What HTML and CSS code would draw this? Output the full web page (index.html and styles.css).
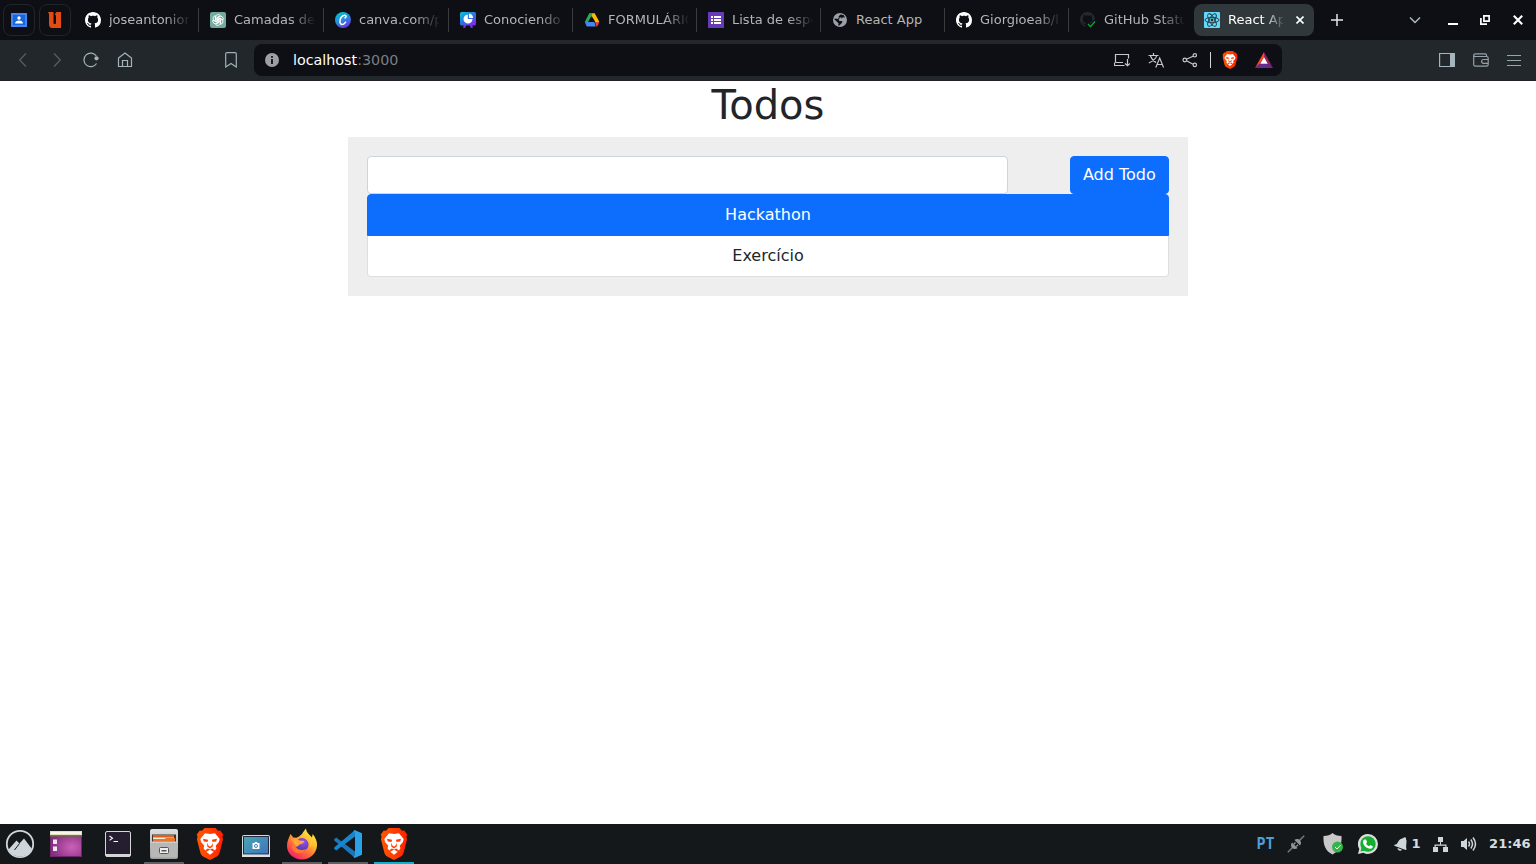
FILE: index.html
```html
<!DOCTYPE html>
<html lang="pt">
<head>
<meta charset="utf-8">
<title>React App</title>
<link rel="stylesheet" href="styles.css">
</head>
<body>
<svg class="defs" width="0" height="0" aria-hidden="true">
  <defs>
    <linearGradient id="gBrave" x1="0" x2="1" y1="0" y2="0"><stop offset="0" stop-color="#ff5601"/><stop offset=".5" stop-color="#ff4000"/><stop offset="1" stop-color="#ff1f01"/></linearGradient>
    <linearGradient id="gCanva" x1=".2" y1="0" x2=".7" y2="1"><stop offset="0" stop-color="#00c4cc"/><stop offset=".5" stop-color="#2a8be0"/><stop offset="1" stop-color="#6c2ee6"/></linearGradient>
    <linearGradient id="gShow" x1="0" y1="0" x2=".8" y2="1"><stop offset="0" stop-color="#08cbd0"/><stop offset=".5" stop-color="#2678e0"/><stop offset="1" stop-color="#7d2ae8"/></linearGradient>
    <radialGradient id="gDesk" cx=".68" cy=".6" r=".65"><stop offset="0" stop-color="#cb62b7"/><stop offset="1" stop-color="#852d82"/></radialGradient>
    <linearGradient id="gShot" x1="0" y1="0" x2="1" y2="1"><stop offset="0" stop-color="#4aa9b3"/><stop offset="1" stop-color="#3c6fbb"/></linearGradient>
    <linearGradient id="gFox" x1=".85" y1="0" x2=".2" y2="1"><stop offset="0" stop-color="#fff44f"/><stop offset=".35" stop-color="#ffbd2e"/><stop offset=".62" stop-color="#ff7139"/><stop offset="1" stop-color="#f5156c"/></linearGradient>
    <radialGradient id="gGlobe" cx=".6" cy=".3" r=".7"><stop offset="0" stop-color="#a04dec"/><stop offset="1" stop-color="#4b3aad"/></radialGradient>
    <linearGradient id="gFile" x1="0" y1="0" x2="0" y2="1"><stop offset="0" stop-color="#dededc"/><stop offset="1" stop-color="#9c9c9a"/></linearGradient>
    <symbol id="github" viewBox="0 0 16 16"><path fill="currentColor" d="M8 0C3.58 0 0 3.58 0 8c0 3.54 2.29 6.53 5.47 7.59.4.07.55-.17.55-.38 0-.19-.01-.82-.01-1.49-2.01.37-2.53-.49-2.69-.94-.09-.23-.48-.94-.82-1.13-.28-.15-.68-.52-.01-.53.63-.01 1.08.58 1.23.82.72 1.21 1.87.87 2.33.66.07-.52.28-.87.51-1.07-1.78-.2-3.64-.89-3.64-3.95 0-.87.31-1.59.82-2.15-.08-.2-.36-1.02.08-2.12 0 0 .67-.21 2.2.82.64-.18 1.32-.27 2-.27.68 0 1.36.09 2 .27 1.53-1.04 2.2-.82 2.2-.82.44 1.1.16 1.92.08 2.12.51.56.82 1.27.82 2.15 0 3.07-1.87 3.75-3.65 3.95.29.25.54.73.54 1.48 0 1.07-.01 1.93-.01 2.2 0 .21.15.46.55.38A8.013 8.013 0 0016 8c0-4.42-3.58-8-8-8z"/></symbol>
    <symbol id="brave" viewBox="0 0 28 32">
      <path fill="url(#gBrave)" d="M8.500 0h11l2.500 2.800 2.200-.3 3 4-.7 2.300.5 2.700-3.300 13c-.5 1.800-1.400 3-2.800 4L14 32l-6.900-3.500c-1.400-1-2.300-2.200-2.800-4L1 11.500l.5-2.700L.8 6.500l3-4 2.200.3z"/>
      <path fill="#fff" d="M9 5.300l5 .7 5-.7 4.700 5.700-.8 3-3.200 3.800.7 2.500-1.500 2.200-2.700-2-2.200 1-2.200-1-2.700 2-1.500-2.200.7-2.500L5.100 14l-.8-3zM10.200 23.700l3.800-2 3.800 2-3.800 3z"/>
      <path fill="#ff4000" d="M7 10.800l5.100 1-.6 2.200-3.700-.4zM21 10.800l-5.100 1 .6 2.200 3.700-.4zM11.200 14.800l1.200 2.700L14 18.700l1.600-1.200 1.200-2.700v3.700l-2.800 2-2.800-2z"/>
    </symbol>
  </defs>
</svg>

<header class="tabstrip">
  <div class="pinned"><svg width="16" height="16" viewBox="0 0 16 16"><path fill="#4285f4" d="M0 1h16v14H0z"/><path fill="#1a66d6" d="M2 3h12v10H2z"/><circle cx="8" cy="6" r="1.700" fill="#fff"/><path fill="#fff" d="M4 11.500c0-4 8-4 8 0z"/></svg></div>
  <div class="pinned"><svg width="16" height="16" viewBox="0 0 16 16"><path fill="#e24a16" d="M1 0h5.500v10.500c0 1 .4 1.500 1.200 1.500s1.300-.5 1.300-1.500V3.500L7.800 2.500 9.500 0H14v16H5c-2 0-3-1.500-3-4V2z"/></svg></div>
  <nav class="tabs">
    <div class="tab wide"><svg class="fav white"><use href="#github"/></svg><span class="label">joseantonior</span></div>
    <div class="tab wide"><svg class="fav" viewBox="0 0 16 16"><rect width="16" height="16" rx="2" fill="#74aa9c"/><g fill="none" stroke="#fff" stroke-width=".85"><path id="petal" d="M5.700 9.200V5.100a2.600 2.600 0 0 1 4.700-1.500L7.200 5.500v3.600"/><use href="#petal" transform="rotate(60 8 8)"/><use href="#petal" transform="rotate(120 8 8)"/><use href="#petal" transform="rotate(180 8 8)"/><use href="#petal" transform="rotate(240 8 8)"/><use href="#petal" transform="rotate(300 8 8)"/></g></svg><span class="label">Camadas de</span></div>
    <div class="tab wide"><svg class="fav" viewBox="0 0 16 16"><circle cx="8" cy="8" r="8" fill="url(#gCanva)"/><path d="M10 6c1.400-.8 1.500-2.800-.3-2.800C6.800 3.200 4.500 7 4.900 9.900c.4 3.300 3.700 3.300 5.700.3" fill="none" stroke="#fff" stroke-width="1.500" stroke-linecap="round"/></svg><span class="label">canva.com/p</span></div>
    <div class="tab"><svg class="fav" viewBox="0 0 16 16"><path fill="none" stroke="#7d2ae8" stroke-width="2.200" d="M5.500 12L4 16M10.500 12l1.500 4"/><rect width="16" height="13.500" rx="1.500" fill="url(#gShow)"/><path fill="#fff" d="M7.800 2.500V7h4.700A4.500 4.500 0 1 1 7.800 2.500z"/><path fill="#fff" d="M9 1.700A4.300 4.300 0 0 1 13 6H9z"/></svg><span class="label">Conociendo</span></div>
    <div class="tab"><svg class="fav" viewBox="0 0 16 16"><path fill="#188038" d="M5.300 1.200H8l1.500 2.500L8 6.200z"/><path fill="#fbbc04" d="M8 1.200h2.700l4.600 8.500-3.700.8L7.300 3z"/><path fill="#34a853" d="M5.300 1.200H8L8.500 2 3.500 11 .8 10z"/><path fill="#4285f4" d="M.8 10h9.500l1.500 4.500H3.500c-.5 0-.8-.2-1-.6z"/><path fill="#ea4335" d="M11 10h4.300l-1.800 3.900c-.2.400-.6.600-1 .6z"/></svg><span class="label">FORMULÁRIO</span></div>
    <div class="tab"><svg class="fav" viewBox="0 0 16 16"><path fill="#673ab7" d="M0 0h16v16H0z"/><path fill="#fff" d="M3 4h2v2H3zm3 0h7v2H6zM3 7h2v2H3zm3 0h7v2H6zm-3 3h2v2H3zm3 0h7v2H6z"/></svg><span class="label">Lista de espe</span></div>
    <div class="tab"><svg class="fav" viewBox="0 0 16 16"><circle cx="8" cy="8" r="7" fill="#9aa0a6"/><path fill="#0e0f14" d="M8.500 2.500l3 .6 1.600 2.400-2.300-.3-.8 1.300H7.500L6.500 8l1.200 1h2.500v1.600l-2.500 2.700-1.400.4.200-2.500L2.500 7.500l.2-1 3 .5 1.300-1.500-.5-1z"/><path fill="#9aa0a6" d="M7.500 5.500h2v2h-2z"/></svg><span class="label full">React App</span></div>
    <div class="tab"><svg class="fav white"><use href="#github"/></svg><span class="label">Giorgioeab/l</span></div>
    <div class="tab last"><svg class="fav dark" viewBox="0 0 16 16"><use href="#github" width="15" height="15"/><path d="M8 12l2.500 2.700L15.500 9" fill="none" stroke="#0e0f14" stroke-width="4"/><path d="M8 12l2.500 2.700L15 9.500" fill="none" stroke="#0b9e32" stroke-width="1.500"/></svg><span class="label">GitHub Statu</span></div>
    <div class="tab active"><svg class="fav" viewBox="0 0 16 16"><rect width="16" height="16" rx="1" fill="#61dafb"/><g fill="none" stroke="#263238" stroke-width=".9"><ellipse cx="8" cy="8" rx="7" ry="2.700"/><ellipse cx="8" cy="8" rx="7" ry="2.700" transform="rotate(30 8 8)" visibility="hidden"/><ellipse cx="8" cy="8" rx="7" ry="2.700" transform="rotate(60 8 8)"/><ellipse cx="8" cy="8" rx="7" ry="2.700" transform="rotate(120 8 8)"/></g><circle cx="8" cy="8" r="1.400" fill="#263238"/></svg><span class="label">React App</span><svg class="close" width="8" height="8" viewBox="0 0 8 8"><path d="M.5.500l7 7M7.500.5l-7 7" stroke="#fff" stroke-width="1.600"/></svg></div>
  </nav>
  <svg class="newtab" width="12" height="12" viewBox="0 0 12 12"><path d="M6 0v12M0 6h12" stroke="#e4e6e8" stroke-width="1.500"/></svg>
  <div class="winctl">
    <svg width="12" height="12" viewBox="0 0 12 12"><path d="M1 3.500l5 5 5-5" fill="none" stroke="#a9bcc4" stroke-width="1.500"/></svg>
    <svg width="12" height="12" viewBox="0 0 12 12"><path d="M1 9h10v2H1z" fill="#fff"/></svg>
    <svg width="10" height="10" viewBox="0 0 10 10"><path d="M3.900.9h5.200v5.200H3.900zM.9 3v6.100H7" fill="none" stroke="#fff" stroke-width="1.700"/></svg>
    <svg width="10" height="10" viewBox="0 0 10 10"><path d="M.8.8l8.400 8.400M9.200.8L.8 9.200" stroke="#fff" stroke-width="2.100"/></svg>
  </div>
</header>

<div class="toolbar">
  <div class="navbtns">
    <svg viewBox="0 0 16 16"><path d="M11 1.500L4.700 8 11 14.500" stroke="#586167"/></svg>
    <svg viewBox="0 0 16 16"><path d="M5 1.500L11.300 8 5 14.500" stroke="#586167"/></svg>
    <svg viewBox="0 0 16 16"><path d="M13.500 11.500A6.800 6.800 0 1 1 13.300 4" stroke="#a5b5bc"/><circle cx="13.500" cy="6.300" r="2.100" fill="#a5b5bc"/></svg>
    <svg viewBox="0 0 16 16"><path d="M1.500 6L8 1l6.500 5v8.500h-13zM5.500 14.500v-6h5v6" stroke="#a5b5bc"/></svg>
  </div>
  <svg class="bookmark" viewBox="0 0 16 16"><path d="M2.700 2Q2.700.7 4 .7h8Q13.300.7 13.300 2v13L8 11.500 2.700 15z" stroke="#a0b0b7"/></svg>
  <div class="address">
    <svg width="14" height="14" viewBox="0 0 14 14"><circle cx="7" cy="7" r="7" fill="#9c9fa6"/><path d="M6.100 3h1.800v1.700H6.100zm0 3h1.800v5H6.100z" fill="#0e0f14"/></svg>
    <div class="url">localhost<span class="port">:3000</span></div>
    <div class="addricons">
      <svg viewBox="0 0 16 16"><path d="M1.500 10.500v-8h13v4M1.500 10.500H9M.5 10.500v3h10M13.500 7v6.500M11 11.500l2.500 2.300L16 11.500" stroke="#c5c8cc"/></svg>
      <svg viewBox="0 0 16 16"><path d="M.5 3.500h10M5.500 1v2.500M2.500 4C3.500 7 5.500 9 8 10.500M8.500 4C8 6.500 4 9.500.8 11" stroke="#c5c8cc"/><path d="M7.800 15.500L11.700 6l3.900 9.500M9.200 12.500h5" stroke="#c5c8cc"/></svg>
      <svg viewBox="0 0 16 16"><path d="M4.500 7.200l6.500-3M4.500 8.800l6.500 3.400" stroke="#c5c8cc"/><circle cx="2.800" cy="8" r="1.800" stroke="#c5c8cc"/><circle cx="12.800" cy="3.300" r="1.700" stroke="#c5c8cc"/><circle cx="12.800" cy="12.900" r="1.700" stroke="#c5c8cc"/></svg>
    </div>
    <i class="bar"></i>
    <svg class="shield"><use href="#brave"/></svg>
    <svg width="18" height="16" viewBox="0 0 18 16"><path fill="#ff4724" d="M9 0v5l-4 6.500L0 16z"/><path fill="#9e1f63" d="M9 0l9 16-5-4.500L9 5z"/><path fill="#662d91" d="M0 16l5-4.500h8l5 4.500z"/><path fill="#fff" d="M9 5l3.800 6.700H5.200z"/></svg>
  </div>
  <div class="toolright">
    <svg viewBox="0 0 16 16"><path d="M.6 1.500h14.800v13H.6z" stroke="#a5b5bc"/><path d="M11 1.500h4.500v13H11z" fill="#a5b5bc"/></svg>
    <svg viewBox="0 0 16 16"><path d="M13.500 4.500V3q0-1.200-1.200-1.200H2.200Q.7 1.800.7 3.200V12.500Q.7 14.200 2.400 14.200h11q1.800 0 1.800-1.700V6.200q0-1.700-1.800-1.700H2.500Q.7 4.500.7 3.200M15 7.500h-4.500a1.800 1.800 0 0 0 0 3.800H15" stroke="#94a2a9"/></svg>
    <svg viewBox="0 0 16 16"><path d="M1 3.500h14M1 8.500h14M1 13.500h14" stroke="#98a5ab"/></svg>
  </div>
</div>

<main class="page">
  <h1>Todos</h1>
  <section class="card">
    <form class="entry"><input type="text" class="field" aria-label="Todo"><button type="button" class="btn">Add Todo</button></form>
    <ul class="list"><li class="item current">Hackathon</li><li class="item">Exercício</li></ul>
  </section>
</main>

<footer class="taskbar">
  <div class="apps">
    <div class="app"><svg width="30" height="30" viewBox="0 0 30 30"><circle cx="15" cy="15" r="13.200" fill="none" stroke="#ced6db" stroke-width="1.800"/><path fill="#ced6db" d="M3.500 20.500L11.500 11.500l3 3 4.500-5 8 10.500C24 30 7 30 3.500 20.500z"/><path d="M14.500 14.500L9.500 21" stroke="#14181b" stroke-width="1"/></svg></div>
    <div class="app"><svg width="32" height="26" viewBox="0 0 32 26"><path fill="url(#gDesk)" d="M0 1h32v25H0z"/><path fill="none" stroke="#6c2669" d="M.5.500h31v25H.5z"/><path fill="#e3dfc4" d="M0 0h32v4.500H0z"/><path fill="#f8f6ea" d="M1 1h30v2H1z"/><path fill="#6f6643" d="M0 4.200h32v1.500H0z"/><path fill="#f1e4f1" d="M3 8.500h4v4.500H3zm0 7h4V20H3z"/></svg></div>
    <div class="app gap"><svg width="26" height="26" viewBox="0 0 26 26"><rect x=".5" y=".5" width="25" height="25" rx="1.500" fill="#241e30" stroke="#d6d4d5"/><path fill="#d6d4d5" d="M1 23h24v2.500H1z"/><path d="M4.500 5l3 2.200-3 2.200M8.500 10.500H13" fill="none" stroke="#fff" stroke-width="1.100"/></svg></div>
    <div class="app open"><svg width="28" height="30" viewBox="0 0 28 30"><rect width="28" height="30" rx="2" fill="url(#gFile)"/><path fill="#3c3633" d="M2 5.500h24V13H2z"/><path fill="#e0601f" d="M3 6h21v3H3z"/><path fill="#f3e8d5" d="M3 8.500h21V10H3z"/><path fill="#e8762b" d="M3 10h12l1-1h9v3.500H3z"/><path fill="#b7b7b5" d="M1 13h26v15.500H1z"/><path fill="#e2e2e0" d="M1 12.500h26v1H1z"/><rect x="9.500" y="18.500" width="9" height="6" rx="1" fill="#eee" stroke="#555"/><path fill="#555" d="M11.500 21h5v1.500h-5z"/></svg></div>
    <div class="app"><svg class="lion"><use href="#brave"/></svg></div>
    <div class="app"><svg class="shot" width="28" height="22" viewBox="0 0 28 22"><rect x=".5" y=".5" width="27" height="21" rx="1" fill="url(#gShot)" stroke="#dadada"/><path d="M1.500 1.500h25v17.500h-25z" fill="none" stroke="#25283c"/><path fill="#ddd" d="M0 19.500h28V22H0z"/><path fill="#fff" d="M10.500 8h2l.6-1h1.800l.6 1h2v6h-7z"/><circle cx="14" cy="11" r="1.500" fill="none" stroke="#4386b8"/></svg></div>
    <div class="app open"><svg width="32" height="32" viewBox="0 0 32 32"><path fill="url(#gFox)" d="M3 9.500L4.500 6l2.800 3.500 3 .2L13 8.500l3-2.500C17.500 3.500 18.500 2 20 .5c.5 4.500 3.500 6 6 9l.7-3.500C29.500 9.500 31.500 13.500 31 18 30 26 24 31.500 16 31.500S1 26 1 18c0-3 .8-6 2-8.500z"/><circle cx="16" cy="16.500" r="6.500" fill="url(#gGlobe)"/><path fill="#ffa436" d="M5 11l5-1 3.500 2.500 5 .5c-.5 2-2.500 3-4.500 3.300-1 1.200-1.800 1.200-3 2.700-2.500-2-4.500-4.500-6-8z"/><path fill="#ff7a2f" d="M8 14c0 7 6.500 9.500 12 7-3 6-13 5.500-14-2z"/><path fill="#ffc93a" d="M19 8c5 1 6.500 6 4.500 12 4-4 3-10 0-13z"/></svg></div>
    <div class="app open"><svg width="28" height="28" viewBox="0 0 28 28"><path fill="#1c75b8" d="M0 9.500l2.200-2L21 21.500V28L.2 10.500z"/><path fill="#1687cf" d="M0 18.500l2.200 2L21 6.500V0L.2 17.500z"/><path fill="#2ba1e8" d="M20.500 0L28 3.300v21.400L20.500 28l-1-1.500 1.500-1V2.500l-1.500-1z"/></svg></div>
    <div class="app open focus"><svg class="lion"><use href="#brave"/></svg></div>
  </div>
  <div class="tray">
    <span class="lang">PT</span>
    <svg width="18" height="18" viewBox="0 0 18 18"><path d="M.8 17.200l5-5M12.200 5.800l5-5" stroke="#77797b" stroke-width="1.500"/><path fill="#939698" d="M5 7.500l5.500 5.500c-1.700 1.500-4 1.200-5.300 0s-1.700-3.800-.2-5.500zM7.500 5L13 10.500c1.500-1.700 1.200-4 0-5.300S9.200 3.500 7.500 5z"/><path d="M6.800 9.200l1.700-1.700M9.300 11.500l1.700-1.700" stroke="#939698" stroke-width="1.300"/></svg>
    <svg class="guard" width="21" height="22" viewBox="0 0 21 22"><path fill="#c8c8c8" d="M9.500 0c2 2 5 3 9 3 .5 9-2 15-9 18.500C2.500 18 0 12 .5 3c4 0 7-1 9-3z"/><circle cx="14.500" cy="14" r="5.500" fill="#35b44a"/><path d="M12 14l2 2 3.500-3.700" fill="none" stroke="#fff"/></svg>
    <svg class="whats" width="20" height="20" viewBox="0 0 20 20"><path fill="#dedede" d="M10 0a10 10 0 0 1 0 20c-1.700 0-3.300-.4-4.700-1.200L0 20l1.300-5A10 10 0 0 1 10 0z"/><circle cx="10" cy="10" r="7.700" fill="#14af30"/><path fill="#14af30" d="M2.500 17.500l1-4L7 16.500z"/><path fill="#fff" d="M6.700 5.500h1.200l1.200 2.600-1 1.300c.7 1.500 1.700 2.300 3 2.800l1.200-1.200 2.500 1.200c.2 1.500-1 2.500-2.500 2.500-4 0-7.600-4-7.300-7 .1-1 .8-1.800 1.700-2.200z"/></svg>
    <svg class="bell" width="14" height="14" viewBox="0 0 14 14"><path fill="#ced6db" d="M10.500.2l1.500.6v1.500c1.300 2.200-.2 5.200.2 8.200l.3 2-.8.5L.2 8.700l.3-.9 2-.6C4.500 5.500 4.500 2 8.800 1.300zM3.500 11l4.700 1.800c-1.700 1.900-4.700.8-4.700-1.800z"/></svg>
    <span class="count">1</span>
    <svg class="net" width="15" height="15" viewBox="0 0 15 15"><path fill="#ced6db" d="M5 0h5v5H8v2.500h5.500V10H15v5h-5v-5h2.300V8.700H2.700V10H5v5H0v-5h1.500V7.500H7V5H5z"/></svg>
    <svg class="vol" width="16" height="16" viewBox="0 0 16 16"><path fill="#ced6db" d="M0 5h2.500L6 2v12l-3.500-3H0z"/><path d="M7.500 5.500q2 2.500 0 5M9.800 3.500q3.400 4.500 0 9M12 1.500q5 6.500 0 13" fill="none" stroke="#ced6db" stroke-width="1.500"/></svg>
    <span class="clock">21:46</span>
  </div>
</footer>
</body>
</html>
```
FILE: styles.css
```css
* { box-sizing: border-box; }
body {
  margin: 0;
  height: 864px;
  overflow: hidden;
  display: flex;
  flex-direction: column;
  background: #fff;
  font-family: "DejaVu Sans", sans-serif;
}
svg { display: block; flex: none; }
.defs { position: absolute; }

.tabstrip {
  height: 40px;
  flex: none;
  display: flex;
  align-items: center;
  background: #0e0f14;
  padding-left: 3px;
}
.pinned {
  width: 32px;
  height: 32px;
  margin-right: 4px;
  border: 1px solid #202529;
  border-radius: 8px;
  display: flex;
  align-items: center;
  justify-content: center;
  flex: none;
}
.tabs { display: flex; width: 1239px; flex: none; }
.tab {
  width: 124px;
  flex: none;
  height: 32px;
  padding-left: 10px;
  display: flex;
  align-items: center;
  color: #b4b5b8;
  font-size: 13px;
  background: linear-gradient(#3a3b3e, #3a3b3e) right 1px center / 1px 24px no-repeat;
}
.tab.wide { width: 125px; }
.tab.last { background: none; }
.tab.active {
  width: 120px;
  background: #30383c;
  border-radius: 8px;
  color: #fff;
}
.fav { width: 16px; height: 16px; margin-right: 8px; }
.white { color: #fff; }
.dark { color: #24292e; }
.label {
  width: 80px;
  flex: none;
  line-height: 20px;
  white-space: nowrap;
  -webkit-mask-image: linear-gradient(90deg, #000 56px, transparent 82px);
  mask-image: linear-gradient(90deg, #000 56px, transparent 82px);
}
.label.full { -webkit-mask-image: none; mask-image: none; }
.active .label {
  width: 55px;
  -webkit-mask-image: linear-gradient(90deg, #000 34px, transparent 58px);
  mask-image: linear-gradient(90deg, #000 34px, transparent 58px);
}
.close { margin-left: 13px; }
.newtab { margin-left: 17px; }
.winctl { display: flex; align-items: center; margin-left: 66px; }
.winctl svg + svg { margin-left: 26px; }
.winctl svg:nth-child(3) { margin-left: 21px; }
.winctl svg:last-child { margin-left: 23px; }

.toolbar {
  height: 41px;
  flex: none;
  display: flex;
  align-items: center;
  background: #21272a;
  border-bottom: 1px solid #202126;
}
.toolbar svg { fill: none; stroke-width: 1.200; }
.navbtns { display: flex; gap: 18px; margin-left: 15px; }
.navbtns svg, .bookmark, .addricons svg, .toolright svg { width: 16px; height: 16px; }
.bookmark { margin-left: 90px; }
.address {
  width: 1028px;
  height: 32px;
  margin-left: 15px;
  padding: 0 9px 0 11px;
  border-radius: 8px;
  background: #0e0f14;
  display: flex;
  align-items: center;
}
.url { margin-left: 14px; flex: 1; font-size: 14.300px; line-height: 20px; color: #fff; }
.port { color: #7b7e83; }
.addricons { display: flex; gap: 18px; }
.bar { width: 1px; height: 16px; margin: 0 11px 0 12px; background: #d4d6d8; }
.shield { width: 16px; height: 18px; margin-right: 17px; }
.toolright { display: flex; gap: 17.500px; margin-left: 157px; }

.page { flex: 1; background: #fff; color: #212529; }
.page h1 {
  margin: 0 0 8px;
  font-size: 40px;
  font-weight: 400;
  line-height: 48px;
  text-align: center;
}
.card { width: 840px; margin: 0 auto; padding: 19.200px; background: #eee; }
.entry { display: flex; justify-content: space-between; }
.field {
  width: 80%;
  height: 38px;
  border: 1px solid #ced4da;
  border-radius: 4px;
  background: #fff;
  outline: none;
}
.btn {
  height: 38px;
  padding: 6px 12px;
  border: 1px solid #0d6efd;
  border-radius: 4px;
  background: #0d6efd;
  color: #fff;
  font: 16px/24px "DejaVu Sans", sans-serif;
}
.list { list-style: none; margin: 0; padding: 0; border-radius: 4px; }
.item {
  padding: 8px 16px;
  border: 1px solid rgba(0, 0, 0, .125);
  border-top: 0;
  border-radius: 0 0 4px 4px;
  background: #fff;
  font-size: 16px;
  line-height: 24px;
  text-align: center;
}
.item.current {
  border: 1px solid #0d6efd;
  border-radius: 4px 4px 0 0;
  background: #0d6efd;
  color: #fff;
}

.taskbar {
  height: 40px;
  flex: none;
  display: flex;
  justify-content: space-between;
  background: #14181b;
}
.apps { display: flex; gap: 6px; }
.app {
  width: 40px;
  height: 40px;
  display: flex;
  align-items: center;
  justify-content: center;
}
.gap { margin-left: 6px; }
.open { box-shadow: inset 0 -2px #5c6063; }
.focus { box-shadow: inset 0 -2px #08b4ce; }
.lion { width: 28px; height: 32px; }
.shot { margin-top: 4px; }
.tray { display: flex; align-items: center; padding-right: 5.500px; color: #d6dde1; font-weight: 700; }
.lang { font: 700 15px "DejaVu Sans Mono", monospace; color: #4e9fd8; margin-right: 12px; }
.guard { margin-left: 18px; }
.whats { margin-left: 14px; }
.bell { margin-left: 16px; }
.count { font-size: 13px; line-height: 15px; margin: -2px 0 0 4px; }
.net { margin-left: 12px; }
.vol { margin-left: 13px; }
.clock { font-size: 13px; line-height: 15px; margin: -2px 0 0 12.500px; }
```
